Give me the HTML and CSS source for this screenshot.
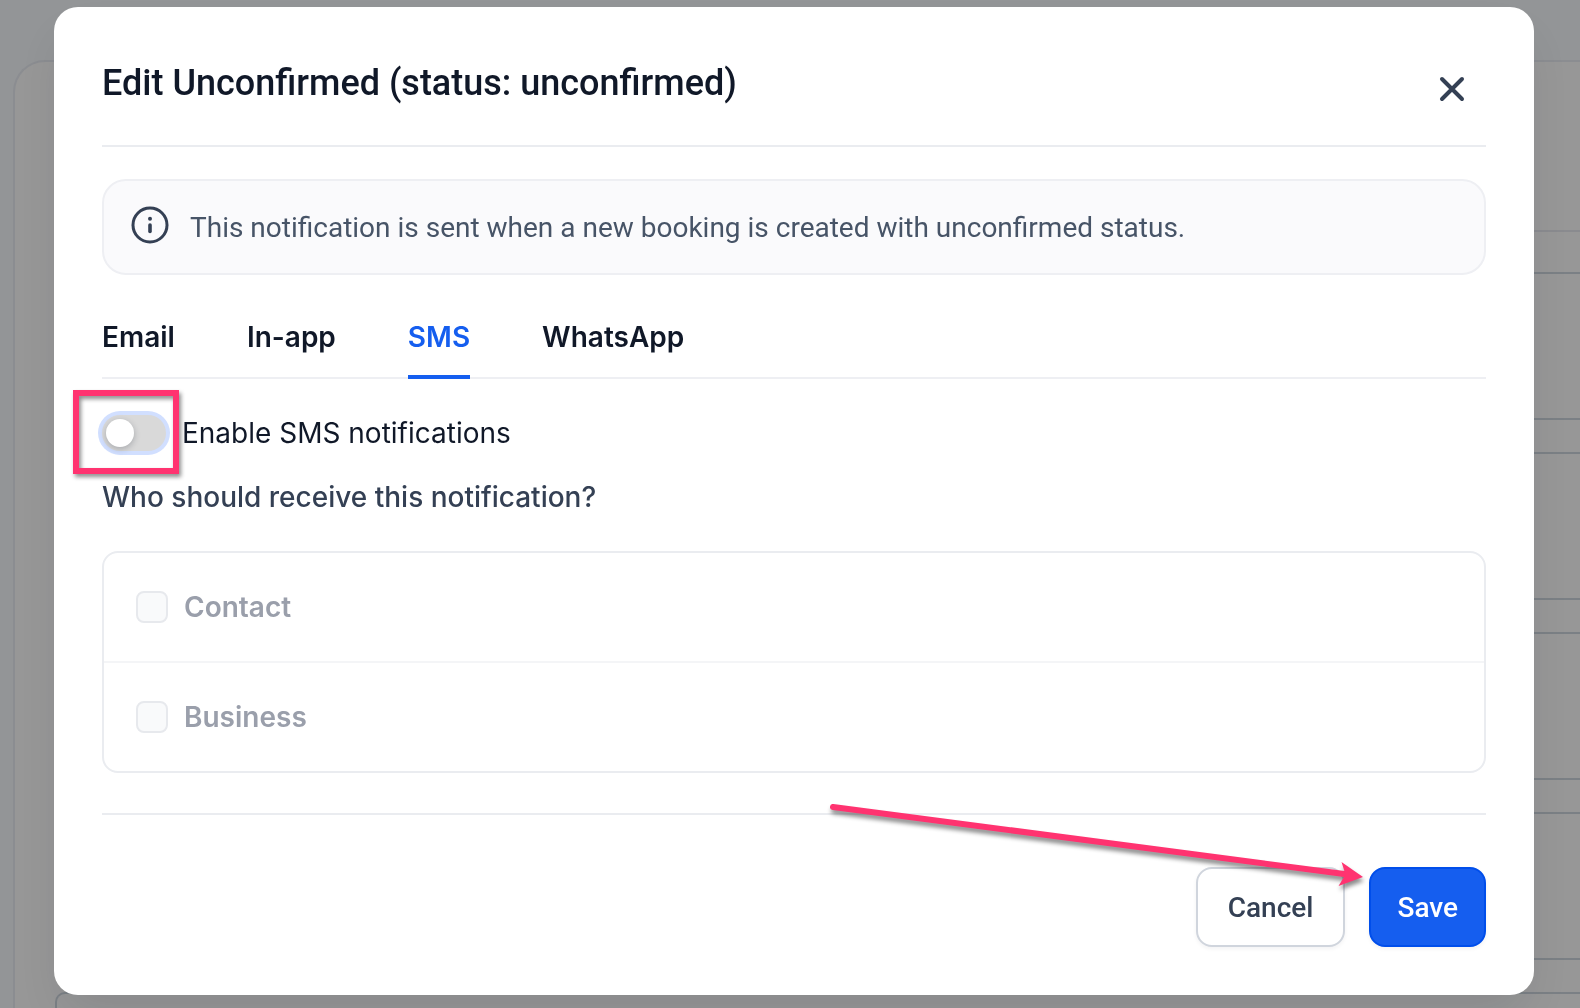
FILE: index.html
```html
<!DOCTYPE html>
<html lang="en">
<head>
<meta charset="utf-8">
<meta name="viewport" content="width=device-width, initial-scale=1">
<title>Edit notification</title>
<link rel="stylesheet" href="styles.css">
</head>
<body>
<div class="page" aria-hidden="true">
  <div class="panel">
    <div class="panel-head"></div>
    <div class="panel-body">
      <div class="item"></div>
      <div class="item"></div>
      <div class="item"></div>
      <div class="item"></div>
      <div class="item"></div>
    </div>
  </div>
</div>

<div class="overlay">
  <section class="modal" role="dialog" aria-modal="true" aria-labelledby="dialog-title">
    <header class="modal-head">
      <h1 class="title" id="dialog-title">Edit Unconfirmed (status: unconfirmed)</h1>
      <button class="close" type="button" aria-label="Close">
        <svg width="48" height="48" viewBox="0 0 48 48" fill="none" stroke="currentColor" stroke-width="4" stroke-linecap="round"><path d="M14 14l20 20M34 14l-20 20"/></svg>
      </button>
    </header>

    <div class="info">
      <svg class="info-icon" width="40" height="40" viewBox="0 0 40 40" fill="none" stroke="currentColor" stroke-linecap="round"><circle cx="20" cy="20" r="17" stroke-width="3"/><path d="M20 20v6.5" stroke-width="3.6"/><circle cx="20" cy="13.8" r="2" fill="currentColor" stroke="none"/></svg>
      <p class="info-text">This notification is sent when a new booking is created with unconfirmed status.</p>
    </div>

    <div class="tabs" role="tablist">
      <button class="tab" type="button" role="tab" aria-selected="false">Email</button>
      <button class="tab" type="button" role="tab" aria-selected="false">In-app</button>
      <button class="tab tab-active" type="button" role="tab" aria-selected="true">SMS</button>
      <button class="tab" type="button" role="tab" aria-selected="false">WhatsApp</button>
    </div>

    <div class="switch-row">
      <input class="switch" type="checkbox" role="switch" id="enable-sms">
      <label for="enable-sms">Enable SMS notifications</label>
      <span class="callout-box"></span>
    </div>

    <h2 class="question" id="question">Who should receive this notification?</h2>
    <div class="recipients" role="group" aria-labelledby="question">
      <div class="recipient">
        <input class="check" type="checkbox" id="contact" disabled>
        <label for="contact">Contact</label>
      </div>
      <div class="recipient">
        <input class="check" type="checkbox" id="business" disabled>
        <label for="business">Business</label>
      </div>
    </div>

    <footer class="modal-foot">
      <button class="btn btn-plain" type="button">Cancel</button>
      <button class="btn btn-primary" type="button">Save</button>
      <svg class="callout-arrow" width="560" height="110" viewBox="0 0 560 110" aria-hidden="true"><path d="M21 20L536 87.500" stroke="#ff3370" stroke-width="6" stroke-linecap="round"/><path d="M551 90L529.500 75L533.500 87.500L526.500 99Z" fill="#ff3370"/></svg>
    </footer>
  </section>
</div>
</body>
</html>
```
FILE: styles.css
```css
* {
  box-sizing: border-box;
}

body {
  margin: 0;
  background: #939597;
  font-family: Inter, "Liberation Sans", sans-serif;
  font-size: 28px;
  line-height: 40px;
  color: #101828;
}

button {
  font: inherit;
  cursor: pointer;
}

/* Dimmed page behind the dialog */
.page {
  height: 100vh;
  overflow: hidden;
  padding: 60px 0 0 13px;
}

.panel {
  height: 100%;
  overflow: hidden;
  padding-left: 40px;
  border: 2px solid #8b8d91;
  border-width: 2px 0 0 2px;
  border-radius: 32px 0 0 0;
  background: #979797;
}

.panel-head {
  height: 170px;
  border-bottom: 2px solid #8a8b8f;
}

.panel-body {
  display: grid;
  gap: 32px;
  padding: 40px 0;
}

.item {
  height: 148px;
  border: 2px solid #7b8085;
  border-right: 0;
  border-radius: 10px 0 0 10px;
}

/* Dialog */
.overlay {
  position: fixed;
  inset: 0;
  padding: 7px 46px 13px 54px;
}

.modal {
  padding: 48px;
  border-radius: 24px;
  background: #fff;
  box-shadow: 0 24px 48px -12px rgba(16, 24, 40, 0.12);
}

.modal-head {
  display: flex;
  justify-content: space-between;
  align-items: flex-start;
  padding-bottom: 22px;
  border-bottom: 2px solid #eaecf0;
}

.title {
  margin: 0;
  font: 500 36px/56px Roboto, "Liberation Sans", sans-serif;
}

.close {
  display: flex;
  padding: 10px;
  border: 0;
  background: none;
  color: #344054;
}

.info {
  display: flex;
  align-items: flex-start;
  gap: 20px;
  margin-top: 32px;
  padding: 24px 26px;
  border: 2px solid #eeeff3;
  border-radius: 24px;
  background: #fafafc;
}

.info-icon {
  flex: none;
  color: #344054;
}

.info-text {
  margin: 0;
  padding: 3px 0 1px;
  font-family: Roboto, "Liberation Sans", sans-serif;
  color: #475467;
}

.tabs {
  display: flex;
  gap: 72px;
  margin-top: 42px;
  box-shadow: inset 0 -2px #eeeff3;
}

.tab {
  padding: 0 0 18px;
  border: 0;
  border-bottom: 4px solid transparent;
  background: none;
  color: #101828;
  font-weight: 600;
}

.tab-active {
  border-color: #155eef;
  color: #155eef;
}

.switch-row {
  position: relative;
  display: flex;
  align-items: center;
  gap: 16px;
  margin-top: 34px;
}

.switch {
  appearance: none;
  width: 64px;
  height: 36px;
  margin: 0;
  padding: 4px;
  border-radius: 18px;
  background: #d9d9d9;
  box-shadow: 0 0 0 4px #d1dfff;
}

.switch::before {
  content: "";
  display: block;
  width: 28px;
  height: 28px;
  border-radius: 50%;
  background: #fff;
  box-shadow: 0 2px 6px rgba(16, 24, 40, 0.25);
}

.switch:checked {
  background: #155eef;
}

.switch:checked::before {
  margin-left: auto;
}

.question {
  margin: 24px 0 0;
  font-size: 28px;
  font-weight: 500;
  color: #344054;
}

.recipients {
  margin-top: 34px;
  border: 2px solid #eaecf0;
  border-radius: 16px;
}

.recipient {
  display: flex;
  align-items: center;
  gap: 16px;
  padding: 34px 32px;
  color: #9a9fab;
  font-weight: 600;
}

.recipient + .recipient {
  border-top: 2px solid #f4f5f7;
}

.check {
  appearance: none;
  width: 32px;
  height: 32px;
  margin: 0;
  border: 2px solid #e7e9ed;
  border-radius: 8px;
  background: #f9fafb;
}

.modal-foot {
  position: relative;
  display: flex;
  justify-content: flex-end;
  gap: 24px;
  margin-top: 40px;
  padding-top: 52px;
  border-top: 2px solid #eaecf0;
}

.btn {
  padding: 19px 26px 17px;
  border: 2px solid;
  border-radius: 16px;
  font-family: Roboto, "Liberation Sans", sans-serif;
  font-weight: 500;
  box-shadow: 0 2px 4px rgba(16, 24, 40, 0.05);
}

.btn-plain {
  padding-inline: 30px;
  border-color: #d0d5dd;
  background: #fff;
  color: #344054;
}

.btn-primary {
  border-color: #004eeb;
  background: #155eef;
  color: #fff;
}

/* Tutorial markers laid over the dialog */
.callout-box {
  position: absolute;
  top: -23px;
  left: -29px;
  width: 106px;
  height: 84px;
  border: 6px solid #ff3370;
  filter: drop-shadow(2px 3px 2px rgba(0, 0, 0, 0.45));
  pointer-events: none;
}

.callout-arrow {
  position: absolute;
  top: -28px;
  right: 114px;
  filter: drop-shadow(1px 4px 2px rgba(0, 0, 0, 0.45));
  pointer-events: none;
}
```
